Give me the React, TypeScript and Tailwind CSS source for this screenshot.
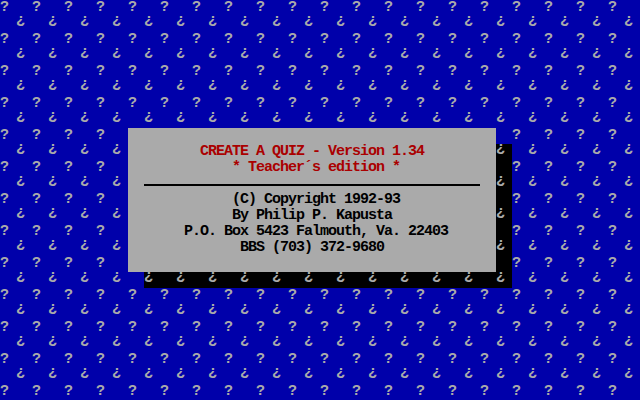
import React from 'react';

const ROWS = 25;
const PAIRS = 40; // each pair is two 8px text columns

// the desktop pattern: "?" on even rows, "¿" on odd rows, every 4 columns
const glyphAt = (row: number, pair: number) => {
  // cells hidden behind the window stay empty
  if (row >= 8 && row <= 16 && pair >= 8 && pair <= 30) return '';
  if (row % 2 === 0) return pair % 2 === 0 ? '?' : '';
  return pair % 2 === 1 ? '¿' : '';
};

// the window's drop shadow, as pair ranges per row
const inShadow = (row: number, pair: number) => {
  if (row >= 9 && row <= 16) return pair === 31;
  if (row === 17) return pair >= 9 && pair <= 31;
  return false;
};

const lines = [
  { text: 'CREATE A QUIZ - Version 1.34', pad: 'pl-[72px]', color: 'text-[#aa0000]' },
  { text: '* Teacher´s edition *', pad: 'pl-[104px]', color: 'text-[#aa0000]' },
  { text: '', pad: '', color: '', rule: true },
  { text: '(C) Copyright 1992-93', pad: 'pl-[104px]', color: 'text-black' },
  { text: 'By Philip P. Kapusta', pad: 'pl-[104px]', color: 'text-black' },
  { text: 'P.O. Box 5423 Falmouth, Va. 22403', pad: 'pl-[56px]', color: 'text-black' },
  { text: 'BBS (703) 372-9680', pad: 'pl-[112px]', color: 'text-black' },
];

const App: React.FC = () => {
  return (
    <div
      className="relative w-[640px] h-[400px] overflow-hidden bg-[#0000aa] text-[#aaaaaa] text-[15px] leading-4 tracking-[-1px] font-bold"
      style={{ fontFamily: '"Liberation Mono", "DejaVu Sans Mono", monospace' }}
    >
      {Array.from({ length: ROWS }, (_, row) => (
        <div key={row} className="flex h-4">
          {Array.from({ length: PAIRS }, (_, pair) => {
            const g = glyphAt(row, pair);
            return (
              <div
                key={pair}
                className={`flex w-4 h-4 shrink-0 ${inShadow(row, pair) ? 'bg-black' : ''}`}
              >
                {g && (
                  <span
                    className={`w-2 text-center tracking-normal ${g === '¿' ? '-translate-y-[3px]' : ''}`}
                  >
                    {g}
                  </span>
                )}
              </div>
            );
          })}
        </div>
      ))}

      {/* the dialog window */}
      <div className="absolute left-[128px] top-[128px] w-[368px] h-[144px] bg-[#aaaaaa] pt-4 whitespace-pre">
        {lines.map((line, i) =>
          line.rule ? (
            <div key={i} className="h-4 pt-2 px-4">
              <div className="h-[2px] bg-black"></div>
            </div>
          ) : (
            <div key={i} className={`h-4 ${line.pad} ${line.color}`}>
              {line.text}
            </div>
          )
        )}
      </div>
    </div>
  );
};

export default App;
